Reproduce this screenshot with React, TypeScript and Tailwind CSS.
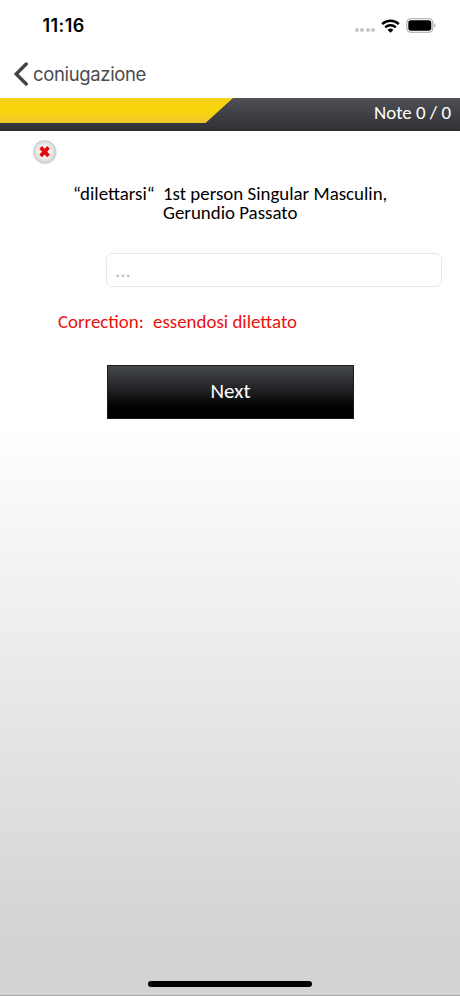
function StatusBar() {
  return (
    <div className="flex h-[50px] items-start justify-between pl-[42.5px] pr-[24px] pt-[15px]">
      <span className="font-['Inter'] text-[18px] font-semibold leading-[22px] tracking-[0.4px] text-black">
        11:16
      </span>

      <div className="flex h-[21px] items-center">
        <div className="mr-[6px] mt-[9px] flex gap-[1.4px]">
          {[0, 1, 2, 3].map((dot) => (
            <span key={dot} className="size-[4px] rounded-full bg-[#c6c6c6]" />
          ))}
        </div>

        <svg className="mr-[6px]" width="19" height="14" viewBox="0 0 19 14" fill="none">
          <path d="M1.2 5.1a12 12 0 0 1 16.6 0" stroke="#000" strokeWidth="2.5" />
          <path d="M4.2 8.3a7.7 7.7 0 0 1 10.6 0" stroke="#000" strokeWidth="2.4" />
          <path d="M9.5 13.8 6.6 11a4.2 4.2 0 0 1 5.8 0Z" fill="#000" />
        </svg>

        <svg width="30" height="15" viewBox="0 0 30 15" fill="none">
          <rect x="0.8" y="0.8" width="26" height="13.4" rx="4" stroke="#a6a6a6" strokeWidth="1.1" />
          <rect x="2.3" y="2.3" width="23" height="10.4" rx="2.6" fill="#000" />
          <path d="M28.2 5.3c1.7.8 1.7 3.6 0 4.4Z" fill="#a6a6a6" />
        </svg>
      </div>
    </div>
  );
}

function NavBar() {
  return (
    <div className="flex h-[48px] items-center pl-[13px]">
      <svg width="16" height="24" viewBox="0 0 16 24" fill="none">
        <path d="M13.2 2 3.2 12l10 10" stroke="#444" strokeWidth="3.4" strokeLinecap="round" strokeLinejoin="miter" />
      </svg>
      <span className="ml-[4px] font-['Inter'] text-[18.5px] leading-6 tracking-[-0.35px] text-[#4b4b4b]">
        coniugazione
      </span>
    </div>
  );
}

function ScoreBar() {
  return (
    <div className="relative flex h-[33px] items-start justify-end border-b border-[#28292d] bg-linear-to-b from-[#505156] to-[#303136] pr-[9px]">
      <svg className="absolute left-0 top-0" width="234" height="26" viewBox="0 0 234 26">
        <defs>
          <linearGradient id="progress" x1="0" y1="0" x2="0" y2="1">
            <stop offset="0" stopColor="#f5d21c" />
            <stop offset="0.45" stopColor="#fad60c" />
            <stop offset="1" stopColor="#efc92d" />
          </linearGradient>
        </defs>
        <path d="M0 0h233l-27.5 25H0Z" fill="url(#progress)" />
      </svg>
      <span className="text-[18.9px] leading-[29px] text-white">Note 0 / 0</span>
    </div>
  );
}

function WrongBadge() {
  return (
    <svg className="ml-[32px] mt-[8px]" width="26" height="26" viewBox="0 0 26 26">
      <defs>
        <radialGradient id="badge" cx="0.5" cy="0.5" r="0.5">
          <stop offset="0" stopColor="#fff" />
          <stop offset="0.55" stopColor="#f1f1f1" />
          <stop offset="0.85" stopColor="#dedede" />
          <stop offset="1" stopColor="#c6c6c6" />
        </radialGradient>
      </defs>
      <circle cx="13" cy="13.4" r="11.7" fill="#dedede" />
      <circle cx="12.5" cy="12.6" r="11.3" fill="url(#badge)" />
      <path d="m8.7 8.4 7.8 8.6m0-8.6-7.8 8.6" stroke="#e30b0b" strokeWidth="3.8" />
    </svg>
  );
}

export default function App() {
  return (
    <div className="flex h-[996px] w-[460px] flex-col overflow-hidden border-b border-[#aaa] bg-white font-['Carlito','Lato',sans-serif]">
      <StatusBar />
      <NavBar />
      <ScoreBar />

      <main className="flex flex-1 flex-col bg-linear-to-b from-white from-34% to-[#d3d3d3] to-94%">
        <WrongBadge />

        {/* Question */}
        <div className="mt-[19px] flex text-[18.9px] leading-[19px] text-black">
          <span className="ml-[73px] w-[90px] shrink-0">“dilettarsi“</span>
          <p className="w-[240px]">1st person Singular Masculin, Gerundio Passato</p>
        </div>

        <input
          className="ml-[106px] mt-[31px] h-[34px] w-[336px] rounded-[6px] border border-[#e7e7e7] bg-white px-2 text-[21px] text-black outline-none placeholder:text-[#bcbcbc]"
          placeholder="..."
        />

        <p className="ml-[58px] mt-[24px] flex text-[18.9px] leading-[22px] text-[#e9120e]">
          <span className="w-[95px]">Correction:</span>
          <span>essendosi dilettato</span>
        </p>

        <button className="ml-[107px] mt-[32px] h-[54px] w-[247px] border border-[#191a1c] bg-linear-to-b from-[#45484c] via-[#1d1e20] to-black pb-px text-[21px] leading-none text-white">
          Next
        </button>

        <div className="mb-[8px] ml-[148px] mt-auto h-[6px] w-[164px] rounded-full bg-black" />
      </main>
    </div>
  );
}
